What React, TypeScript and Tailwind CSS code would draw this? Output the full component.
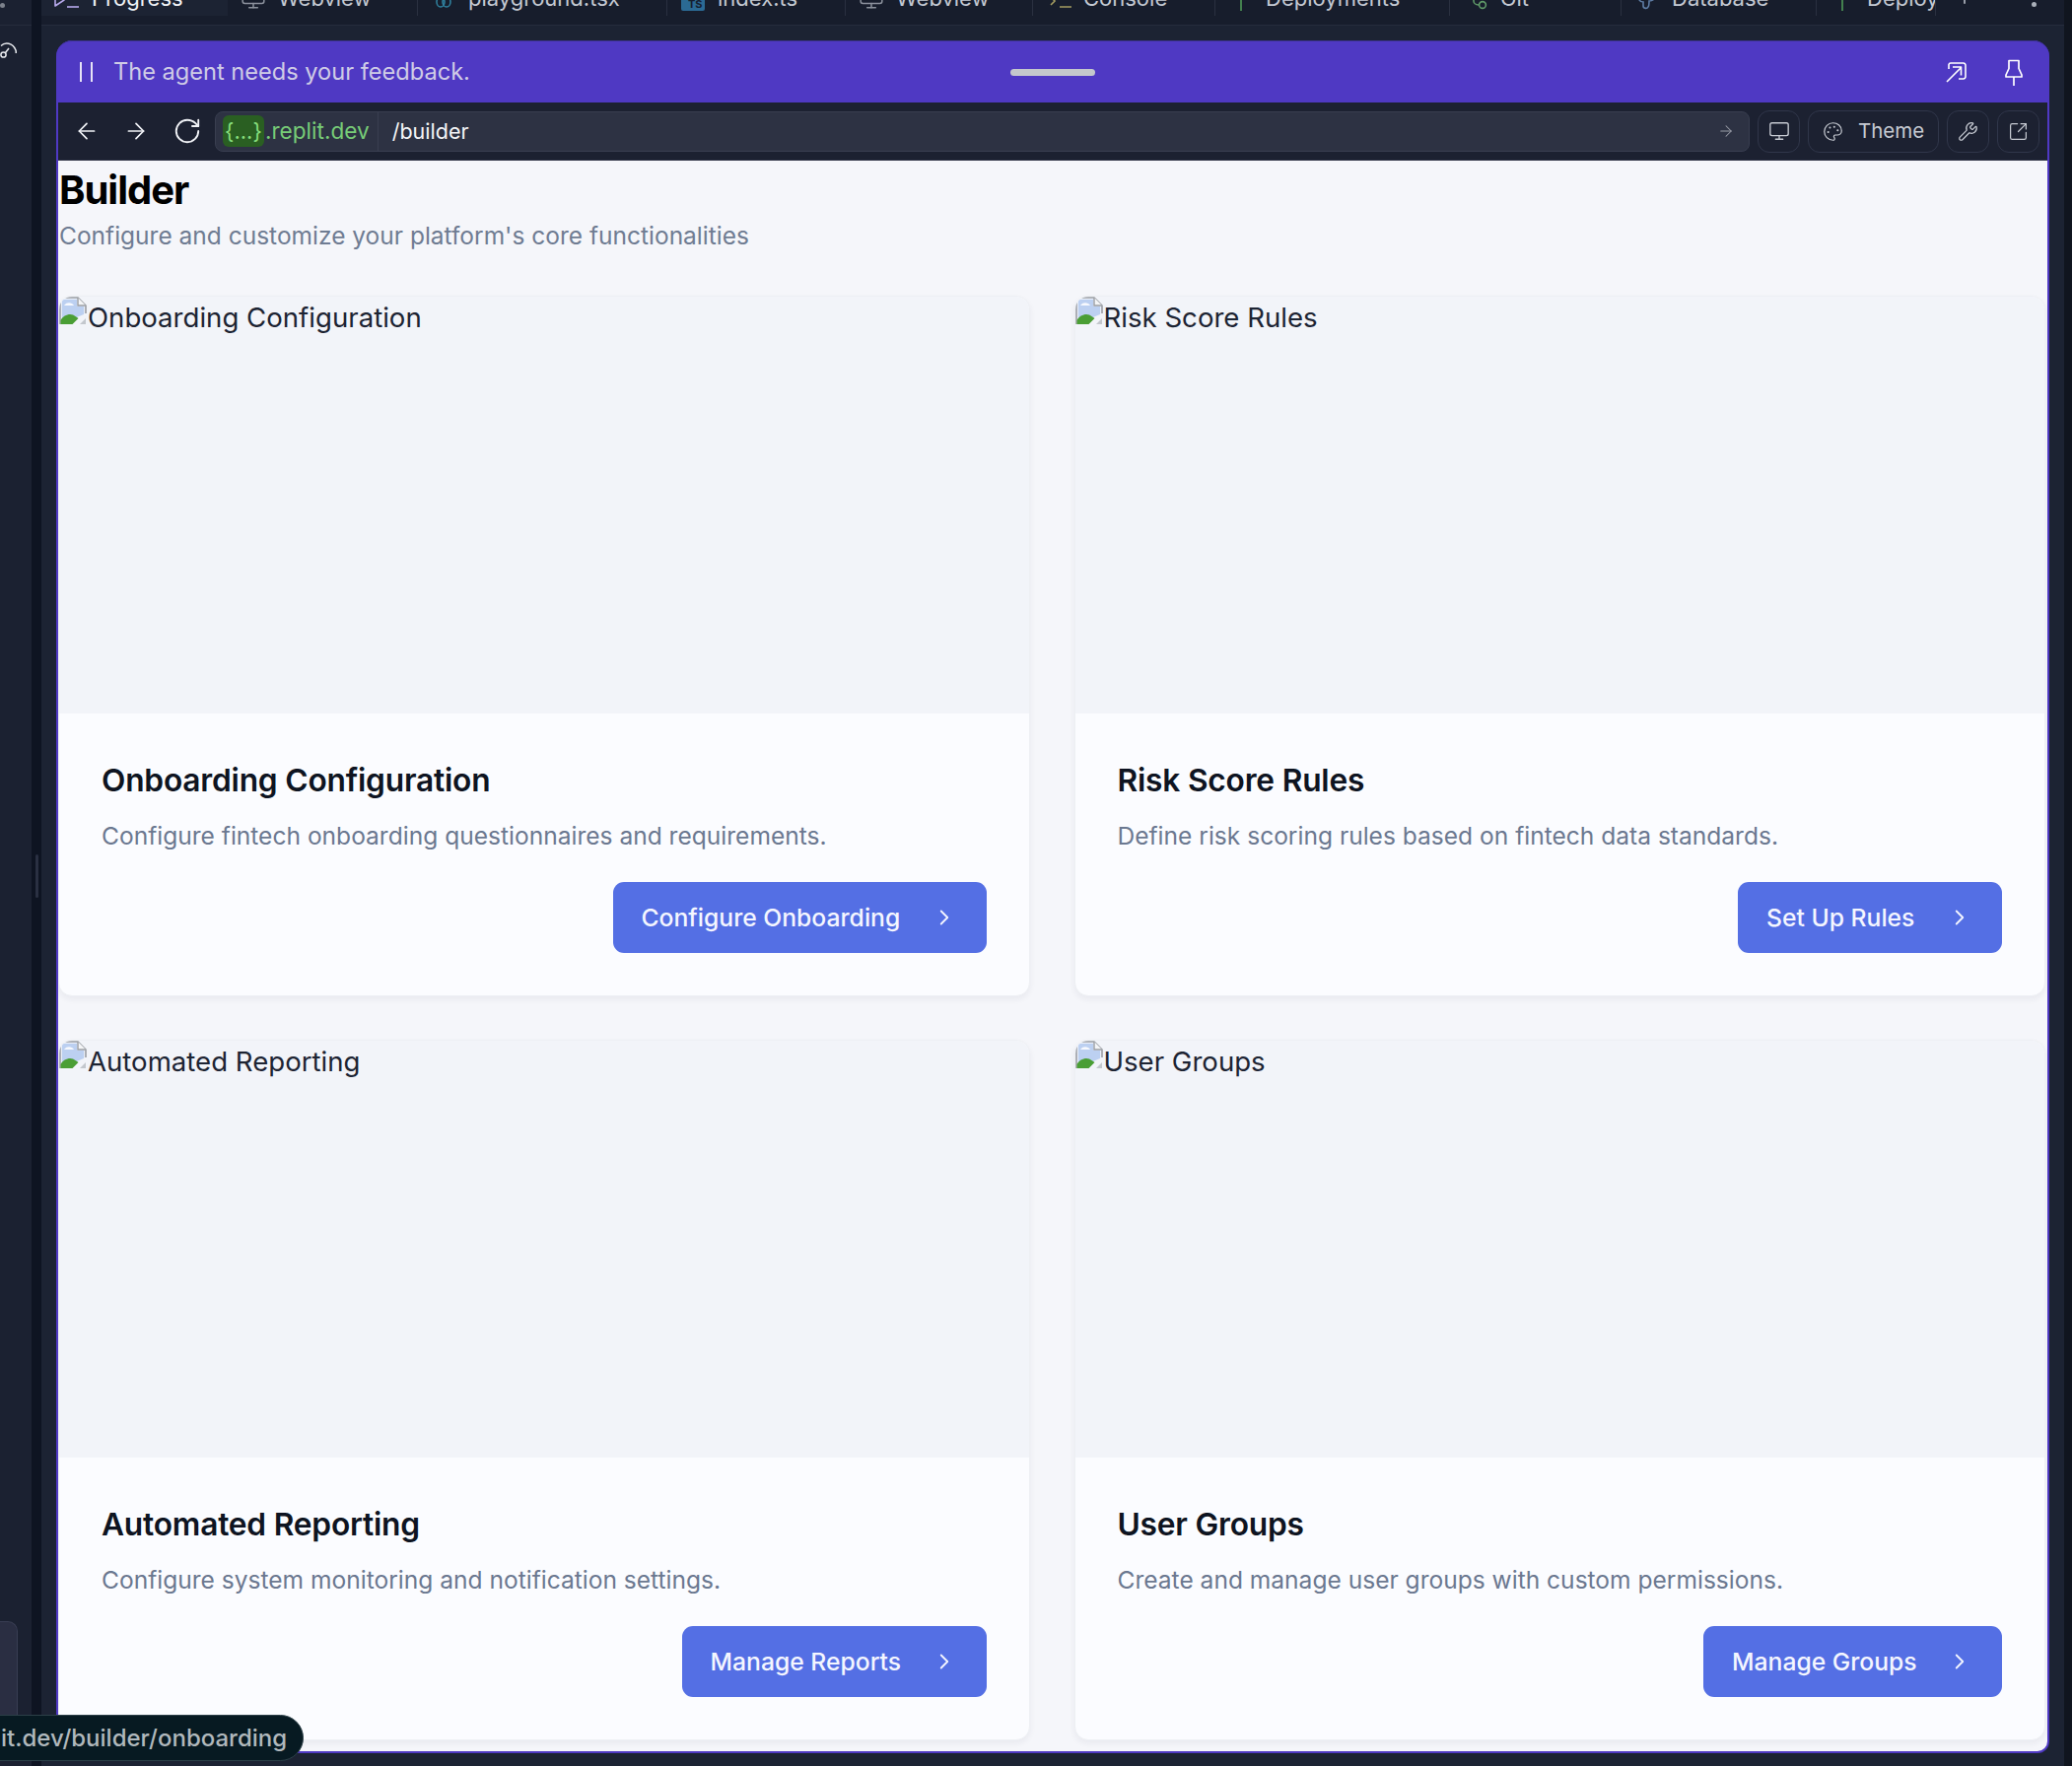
import React from "react";
import { ArrowLeft, ArrowRight, RotateCw, Monitor, Palette, Wrench, SquareArrowOutUpRight, ChevronRight, X, Plus } from "lucide-react";

const font = { fontFamily: "Inter, 'Liberation Sans', sans-serif" };

function BrokenImage() {
  return (
    <svg width="29" height="30" viewBox="0 0 29 30" className="shrink-0 self-start">
      <path d="M1 28V3a2 2 0 0 1 2-2h16l8 8v8" fill="#e9eef8" stroke="#9b9ea4" strokeWidth="1.6" />
      <path d="M19 1v8h8" fill="#f4f5f7" stroke="#9b9ea4" strokeWidth="1.4" />
      <path d="M3 3h15v7h7v8L3 27z" fill="#bcd0f1" />
      <path d="M5 9c3-4 8-3 10 0z" fill="#f7f9fe" />
      <path d="M1.5 28v-4c3-6 11-8 15-4l3 2-6 6z" fill="#4a9e35" />
      <path d="M21 28l6-6v6z" fill="#c3c7cd" />
    </svg>
  );
}

function TabIcon({ kind }: { kind: string }) {
  if (kind === "progress")
    return (
      <svg width="26" height="26" viewBox="0 0 26 26" fill="none" stroke="#b7a9ec" strokeWidth="1.6" className="shrink-0">
        <path d="M1 9l9 6-9 6z" strokeLinejoin="round" />
        <path d="M13 22h12" />
      </svg>
    );
  if (kind === "monitor")
    return <Monitor size={26} strokeWidth={1.4} color="#8b919c" className="shrink-0" />;
  if (kind === "react")
    return (
      <svg width="16" height="26" viewBox="0 0 16 26" fill="none" stroke="#2f7f9c" strokeWidth="1.6" className="shrink-0">
        <ellipse cx="5" cy="17" rx="4" ry="5" />
        <ellipse cx="11" cy="17" rx="4" ry="5" />
      </svg>
    );
  if (kind === "ts")
    return (
      <div className="w-[24px] h-[26px] shrink-0 bg-[#2b6a94] rounded-[2px] flex items-end justify-end pr-[2px] pb-[1px] text-[11px] leading-none text-[#16202e] font-bold">
        TS
      </div>
    );
  if (kind === "console")
    return (
      <svg width="24" height="26" viewBox="0 0 24 26" fill="none" stroke="#a39b60" strokeWidth="1.6" className="shrink-0 ml-[6px]">
        <path d="M1 12l4 4-4 4M10 22h12" />
      </svg>
    );
  if (kind === "deploy")
    return (
      <svg width="18" height="26" viewBox="0 0 18 26" fill="none" stroke="#4f9a58" strokeWidth="1.6" className="shrink-0">
        <path d="M9 26V8M2 14l7-7 7 7" />
      </svg>
    );
  if (kind === "git")
    return (
      <svg width="20" height="26" viewBox="0 0 20 26" fill="none" stroke="#5f9a68" strokeWidth="1.6" className="shrink-0 ml-[6px]">
        <circle cx="14" cy="20" r="3.4" />
        <circle cx="5" cy="10" r="3.4" />
        <path d="M5 14v2c0 2 2 4 5 4" />
      </svg>
    );
  return (
    <svg width="22" height="26" viewBox="0 0 22 26" fill="none" stroke="#5f7ea6" strokeWidth="1.6" className="shrink-0">
      <path d="M2 8c-1 5 1 9 5 9v4c0 3 4 3 5 1 1-1 1-4 1-6 5 0 7-4 7-8" />
    </svg>
  );
}

const tabs = [
  { w: "w-[189px]", kind: "progress", label: "Progress", active: true },
  { w: "w-[193px]", kind: "monitor", label: "Webview" },
  { w: "w-[253px]", kind: "react", label: "playground.tsx" },
  { w: "w-[181px]", kind: "ts", label: "index.ts" },
  { w: "w-[190px]", kind: "monitor", label: "Webview" },
  { w: "w-[185px]", kind: "console", label: "Console" },
  { w: "w-[238px]", kind: "deploy", label: "Deployments" },
  { w: "w-[174px]", kind: "git", label: "Git" },
  { w: "w-[198px]", kind: "db", label: "Database" },
  { w: "w-[121px]", kind: "deploy", label: "Deploy" },
];

function Tabs() {
  return (
    <div className="h-[26px] shrink-0 flex bg-[#171d2c] border-b border-[#262c3c] overflow-hidden">
      {tabs.map((t, i) => (
        <div
          key={i}
          className={`${t.w} ${t.active ? "bg-[#1c2333] text-[#f1f3f7]" : "border-r border-[#2a3040] text-[#c4c9d2]"} h-[36px] -mt-[20px] shrink-0 flex items-center overflow-hidden`}
        >
          <div className="w-[51px] shrink-0 flex justify-center">
            <TabIcon kind={t.kind} />
          </div>
          <span className="text-[22px] leading-[36px] whitespace-nowrap">{t.label}</span>
          {t.active && <X size={18} color="#9aa0ac" className="ml-[19px] -mt-[8px] shrink-0" />}
        </div>
      ))}
      <div className="flex-1 flex items-center h-[36px] -mt-[20px] pl-[20px] text-[#c4c9d2]">
        <Plus size={18} />
        <div className="ml-auto mr-[28px] w-[5px] h-[5px] rounded-full bg-[#aab0ba] mt-[12px]" />
      </div>
    </div>
  );
}

function IconButton({ children }: { children: React.ReactNode }) {
  return (
    <div className="w-[43px] h-[43px] shrink-0 rounded-[12px] border border-[#30364a] flex items-center justify-center text-[#c6cad2]">
      {children}
    </div>
  );
}

function Toolbar() {
  return (
    <div className="h-[59px] shrink-0 flex items-center bg-[#1c2131] border-b border-[#2d3244] pl-[16px] pr-[8px]">
      <ArrowLeft size={26} strokeWidth={1.6} color="#f0f2f6" />
      <ArrowRight size={26} strokeWidth={1.6} color="#f0f2f6" className="ml-[24px]" />
      <RotateCw size={30} strokeWidth={1.5} color="#f0f2f6" className="ml-[24px]" />
      <div className="ml-[13px] w-[1559px] h-[41px] rounded-[8px] bg-[#2d3243] border border-[#393e50] flex items-center">
        <div className="ml-[7px] h-[32px] w-[42px] rounded-[6px] bg-[#2a5f22] text-[#85dc7c] text-[22px] leading-[32px] text-center whitespace-nowrap">
          {"{...}"}
        </div>
        <span className="ml-px text-[22.6px] text-[#77cc77] leading-[32px] whitespace-nowrap">.replit.dev</span>
        <div className="ml-[8px] w-px h-full bg-[#393e50]" />
        <span className="ml-[14px] text-[21.5px] text-[#f4f5f7] leading-[32px]">/builder</span>
        <ArrowRight size={18} strokeWidth={1.4} color="#9a9ea8" className="ml-auto mr-[14px]" />
      </div>
      <div className="ml-[8px] flex items-center gap-[8px]">
        <IconButton>
          <Monitor size={22} strokeWidth={1.5} />
        </IconButton>
        <div className="w-[133px] h-[43px] shrink-0 rounded-[12px] border border-[#30364a] flex items-center text-[#c6cad2] pl-[14px] gap-[15px]">
          <Palette size={21} strokeWidth={1.4} />
          <span className="text-[20.5px] leading-none">Theme</span>
        </div>
        <IconButton>
          <Wrench size={21} strokeWidth={1.4} />
        </IconButton>
        <IconButton>
          <SquareArrowOutUpRight size={21} strokeWidth={1.4} />
        </IconButton>
      </div>
    </div>
  );
}

function Header() {
  return (
    <div className="h-[63px] shrink-0 relative flex items-center bg-[#4f39c3] rounded-t-[16px] border-t border-[#3c3191]">
      <div className="ml-[24px] flex gap-[9px] h-[20px]">
        <div className="w-[2px] h-full bg-[#e6e3f6]" />
        <div className="w-[2px] h-full bg-[#e6e3f6]" />
      </div>
      <span className="ml-[21px] text-[23.6px] leading-none text-[#cfcce6]">The agent needs your feedback.</span>
      <div className="absolute left-[968px] top-[28px] w-[86px] h-[7px] rounded-full bg-[#c4c8cc]" />
      <div className="ml-auto flex items-center gap-[38px] mr-[27px] text-white">
        <svg width="22" height="22" viewBox="0 0 22 22" fill="none" stroke="currentColor" strokeWidth="1.6" strokeLinejoin="round">
          <path d="M3 8V3.5A2 2 0 0 1 5 2h13a2.5 2.5 0 0 1 2 2v12a2.5 2.5 0 0 1-2 2h-5" />
          <path d="M1 21L15 7M7 6h8.5v8.5" />
        </svg>
        <svg width="18" height="27" viewBox="0 0 18 27" fill="none" stroke="currentColor" strokeWidth="1.7" strokeLinejoin="round">
          <path d="M4 1.5h10v8l3 6.5v2H1v-2l3-6.5z" />
          <path d="M9 18v9" />
        </svg>
      </div>
    </div>
  );
}

function Card({ name, desc, cta, btn }: { name: string; desc: string; cta: string; btn: string }) {
  return (
    <div className="h-[711px] rounded-[14px] bg-[#fbfcff] border border-[#eef0f4] shadow-[0_3px_6px_rgba(30,40,70,0.06)] overflow-hidden flex flex-col">
      <div className="h-[423px] shrink-0 bg-[#f2f4f9] flex items-start text-[27.6px] leading-[42px] text-[#1d2433]">
        <BrokenImage />
        <span>{name}</span>
      </div>
      <div className="flex-1 pl-[43px] pr-[43px] pt-[46px] flex flex-col">
        <h3 className="text-[31.7px] leading-[44px] font-semibold text-[#0e1421] tracking-[-0.2px]">{name}</h3>
        <p className="mt-[20px] text-[24.55px] leading-[28px] text-[#6b7890]">{desc}</p>
        <div className="mt-[33px] flex justify-end">
          <div className={`${btn} h-[72px] rounded-[11px] bg-[#546fe4] text-[#f4f6ff] pl-[29px] pr-[30px] flex items-center justify-between`}>
            <span className="text-[24.7px] font-medium leading-none whitespace-nowrap">{cta}</span>
            <ChevronRight size={26} strokeWidth={1.7} />
          </div>
        </div>
      </div>
    </div>
  );
}

const cards = [
  { name: "Onboarding Configuration", desc: "Configure fintech onboarding questionnaires and requirements.", cta: "Configure Onboarding", btn: "w-[379px]" },
  { name: "Risk Score Rules", desc: "Define risk scoring rules based on fintech data standards.", cta: "Set Up Rules", btn: "w-[268px]" },
  { name: "Automated Reporting", desc: "Configure system monitoring and notification settings.", cta: "Manage Reports", btn: "w-[309px]" },
  { name: "User Groups", desc: "Create and manage user groups with custom permissions.", cta: "Manage Groups", btn: "w-[303px]" },
];

function Rail() {
  return (
    <div className="w-[32px] shrink-0 bg-[#1b2131] flex flex-col">
      <div className="h-[26px] shrink-0 border-b border-[#262c3c] relative">
        <div className="mt-[3px] w-[5px] h-[5px] rounded-full bg-[#7d828c]" />
      </div>
      <div className="mt-[17px] text-[#e8eaee]">
        <svg width="17" height="18" viewBox="0 0 17 18" fill="none" stroke="currentColor" strokeWidth="1.5">
          <path d="M1 3.5C5-.5 13 0 16 8c.3 1 .3 2 .2 3" />
          <circle cx="3.5" cy="12.5" r="2.6" />
          <path d="M5.5 10.5L9 6" />
        </svg>
      </div>
      <div className="mt-auto mb-[52px] w-[18px] h-[95px] rounded-tr-[10px] bg-[#2a2e42] border-t border-r border-[#383d52]" />
    </div>
  );
}

export default function App() {
  return (
    <div className="relative w-[2102px] h-[1792px] overflow-hidden flex bg-[#1c2333]" style={font}>
      <Rail />
      <div className="w-[10px] shrink-0 bg-[#0e1422] flex items-center justify-center pb-[14px]">
        <div className="w-[3px] h-[44px] rounded-full bg-[#2a3042]" />
      </div>
      <div className="w-[2052px] shrink-0 flex flex-col">
        <Tabs />
        <div className="flex-1 min-h-0 px-[15px] pt-[15px] pb-[13px] flex">
          <div className="w-full flex flex-col rounded-t-[16px] rounded-b-[12px] overflow-hidden bg-[#4f39c3]">
            <Header />
            <div className="flex-1 min-h-0 mx-[2px] mb-[2px] rounded-b-[10px] overflow-hidden flex flex-col bg-[#f5f6fa]">
              <Toolbar />
              <div className="flex-1 min-h-0 overflow-hidden">
                <h1 className="mt-[7px] ml-px text-[40px] leading-[46px] font-bold tracking-[-1px] text-black">Builder</h1>
                <p className="mt-[5px] ml-px text-[24.5px] leading-[36px] text-[#6f7c92]">
                  Configure and customize your platform's core functionalities
                </p>
                <div className="mt-[43px] mr-[2px] grid grid-cols-2 gap-x-[45px] gap-y-[44px]">
                  {cards.map((c) => (
                    <Card key={c.name} {...c} />
                  ))}
                </div>
              </div>
            </div>
          </div>
        </div>
      </div>
      <div className="w-[8px] shrink-0 bg-[#10151f]" />
      <div className="absolute left-[-20px] top-[1740px] w-[328px] h-[47px] rounded-r-full bg-[#071a22] border border-[#2c4048] text-[24px] leading-[45px] font-medium text-[#b0b8bc] pl-[20px] whitespace-nowrap">
        it.dev/builder/onboarding
      </div>
    </div>
  );
}
